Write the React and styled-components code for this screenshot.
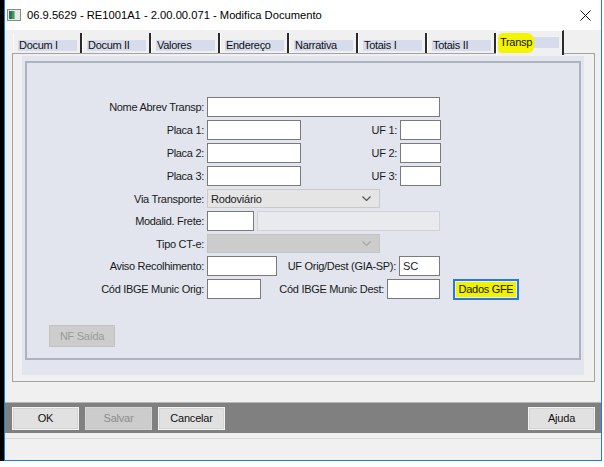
import styled, { createGlobalStyle } from "styled-components";

const GlobalStyle = createGlobalStyle`
  html, body { margin: 0; background: #fff; }
  body { font-family: "Liberation Sans", Arial, sans-serif; color: #1a1a1a; }
  * { box-sizing: border-box; }
`;

const Screen = styled.div`
  display: flex;
  width: 602px;
  height: 461px;
  border-left: 4px solid #000;
`;

const Window = styled.div`
  width: 598px;
  display: flex;
  flex-direction: column;
  border: 1px solid #1c7fd6;
  border-top: none;
`;

const TitleBar = styled.div`
  height: 30px;
  flex: none;
  background: #fff;
  display: flex;
  align-items: center;
  padding: 0 10px 0 2px;
  font-size: 11.2px;
  color: #000;
`;

const TitleText = styled.span`
  flex: 1;
  margin-left: 6px;
`;

const Body = styled.div`
  flex: 1;
  background: #f0f0f0;
  display: flex;
  flex-direction: column;
`;

const TabArea = styled.div`
  padding: 0 6px 0 7px;
`;

const TabStrip = styled.div`
  height: 23px;
  display: flex;
  align-items: flex-end;
  padding-left: 1px;
`;

const Tab = styled.div`
  width: ${({ $active }) => ($active ? 68 : 69)}px;
  height: ${({ $active }) => ($active ? 25 : 20)}px;
  margin-bottom: ${({ $active }) => ($active ? -2 : 0)}px;
  position: relative;
  z-index: ${({ $active }) => ($active ? 2 : 0)};
  background: #f0f0f0;
  border-left: 1px solid #fff;
  border-top: ${({ $active }) => ($active ? "1px solid #fff" : "none")};
  border-right: 2px solid #2a2a2a;
  padding: ${({ $active }) => ($active ? "6px 3px 0 1px" : "7px 3px 0 4px")};
`;

const TabLabel = styled.div`
  height: 11px;
  background: #d6dcec;
  font-size: 11px;
  line-height: 11px;
  letter-spacing: -0.3px;
  padding-left: 1px;
  white-space: nowrap;
  color: #111;
  display: flex;
  align-items: center;
`;

const Highlight = styled.span`
  background: #f4f400;
  border-radius: 5px 7px 6px 4px;
  padding: 4px 2px 5px 2px;
  margin-left: -1px;
`;

const TabPage = styled.div`
  height: 329px;
  border: 1px solid #a3a3a3;
  padding: 2px 10px 6px 9px;
  display: flex;
`;

const Lavender = styled.div`
  flex: 1;
  background: #e2e5ee;
  padding: 5px 3px 15px 3px;
  display: flex;
`;

const Panel = styled.div`
  flex: 1;
  border: 2px solid #acb3bf;
  background: #e2e5ee;
  padding-top: 34px;
  display: flex;
  flex-direction: column;
  gap: 3px;
`;

const Row = styled.div`
  height: ${({ $h }) => $h || 20}px;
  display: flex;
  align-items: center;
`;

const Label = styled.span`
  width: ${({ $w }) => $w || 177}px;
  margin-right: 3px;
  text-align: right;
  font-size: 11px;
  letter-spacing: -0.3px;
  white-space: nowrap;
  color: #1a1a1a;
`;

const Input = styled.div`
  width: ${({ $w }) => $w}px;
  height: 20px;
  margin-left: ${({ $ml }) => $ml || 0}px;
  background: ${({ $disabled }) => ($disabled ? "#e9eaee" : "#fff")};
  border: 1px solid ${({ $disabled }) => ($disabled ? "#d2d2d6" : "#7a7a7a")};
  font-size: 11px;
  padding: 0 3px;
  display: flex;
  align-items: center;
`;

const Select = styled.div`
  width: ${({ $w }) => $w}px;
  height: 19px;
  background: ${({ $disabled }) => ($disabled ? "#cccccc" : "#e5e5e5")};
  border: 1px solid ${({ $disabled }) => ($disabled ? "#c4c4c4" : "#cacaca")};
  font-size: 11px;
  letter-spacing: -0.2px;
  padding: 0 8px 0 3px;
  display: flex;
  align-items: center;
  justify-content: space-between;
`;

const GfeButton = styled.div`
  width: 66px;
  height: 21px;
  margin-left: 13px;
  border: 2px solid #2a79d4;
  background: #e5eef8;
  padding: 1px;
  display: flex;
`;

const GfeInner = styled.div`
  flex: 1;
  background: #f2f200;
  font-size: 11px;
  letter-spacing: -0.3px;
  display: flex;
  align-items: center;
  justify-content: center;
  color: #111;
`;

const NfButton = styled.div`
  width: 66px;
  height: 22px;
  margin: 23px 0 0 22px;
  background: #cdcdcd;
  border: 1px solid #c2c2c2;
  color: #9a9a9a;
  font-size: 11px;
  letter-spacing: -0.3px;
  display: flex;
  align-items: center;
  justify-content: center;
`;

const ButtonBar = styled.div`
  margin-top: 20px;
  height: 31px;
  background: #808080;
  border-top: 1px solid #b6b6b6;
  display: flex;
  align-items: center;
  gap: 6px;
  padding: 0 6px 0 7px;
`;

const Button = styled.div`
  width: 67px;
  height: 23px;
  margin-left: ${({ $push }) => ($push ? "auto" : "0")};
  background: ${({ $disabled }) => ($disabled ? "#cccccc" : "#e1e1e1")};
  border: 1px solid ${({ $disabled }) => ($disabled ? "#d6d6d6" : "#f3f3f3")};
  box-shadow: inset 0 0 0 1px ${({ $disabled }) => ($disabled ? "#c8c8c8" : "#d4d4d4")};
  color: ${({ $disabled }) => ($disabled ? "#8d8d8d" : "#111")};
  font-size: 11px;
  letter-spacing: -0.2px;
  display: flex;
  align-items: center;
  justify-content: center;
`;

const StatusLine = styled.div`
  margin-top: 5px;
  border-top: 1px solid #d9d9d9;
  flex: 1;
`;

const AppIcon = () => (
  <svg width="14" height="12" viewBox="0 0 14 12">
    <rect x="0.5" y="0.5" width="13" height="11" fill="#e8e8e8" stroke="#8a8a8a" />
    <rect x="2" y="2" width="3" height="8" fill="#2f6f5e" />
    <rect x="5" y="2" width="2" height="8" fill="#3f9f55" />
    <rect x="7" y="2" width="1" height="8" fill="#7fbf8f" />
  </svg>
);

const CloseIcon = () => (
  <svg width="11" height="11" viewBox="0 0 11 11">
    <path d="M0.5 0.5 L10.5 10.5 M10.5 0.5 L0.5 10.5" stroke="#111" strokeWidth="1" />
  </svg>
);

const Chevron = ({ color }) => (
  <svg width="9" height="5" viewBox="0 0 9 5">
    <path d="M0.5 0.5 L4.5 4.5 L8.5 0.5" fill="none" stroke={color} strokeWidth="1.2" />
  </svg>
);

const tabs = ["Docum I", "Docum II", "Valores", "Endereço", "Narrativa", "Totais I", "Totais II"];

export default function App() {
  return (
    <>
      <GlobalStyle />
      <Screen>
        <Window>
          <TitleBar>
            <AppIcon />
            <TitleText>06.9.5629 - RE1001A1 - 2.00.00.071 - Modifica Documento</TitleText>
            <CloseIcon />
          </TitleBar>
          <Body>
            <TabArea>
              <TabStrip>
                {tabs.map((t) => (
                  <Tab key={t}>
                    <TabLabel>{t}</TabLabel>
                  </Tab>
                ))}
                <Tab $active>
                  <TabLabel>
                    <Highlight>Transp</Highlight>
                  </TabLabel>
                </Tab>
              </TabStrip>
              <TabPage>
                <Lavender>
                  <Panel>
                    <Row>
                      <Label>Nome Abrev Transp:</Label>
                      <Input $w={233} />
                    </Row>
                    {[1, 2, 3].map((n) => (
                      <Row key={n}>
                        <Label>Placa {n}:</Label>
                        <Input $w={94} />
                        <Label $w={96}>UF {n}:</Label>
                        <Input $w={41} />
                      </Row>
                    ))}
                    <Row $h={19}>
                      <Label>Via Transporte:</Label>
                      <Select $w={173}>
                        Rodoviário
                        <Chevron color="#555" />
                      </Select>
                    </Row>
                    <Row>
                      <Label>Modalid. Frete:</Label>
                      <Input $w={47} />
                      <Input $w={183} $ml={3} $disabled />
                    </Row>
                    <Row $h={19}>
                      <Label>Tipo CT-e:</Label>
                      <Select $w={173} $disabled>
                        <span />
                        <Chevron color="#a8a8a8" />
                      </Select>
                    </Row>
                    <Row>
                      <Label>Aviso Recolhimento:</Label>
                      <Input $w={70} />
                      <Label $w={119}>UF Orig/Dest (GIA-SP):</Label>
                      <Input $w={41}>SC</Input>
                    </Row>
                    <Row>
                      <Label>Cód IBGE Munic Orig:</Label>
                      <Input $w={54} />
                      <Label $w={123}>Cód IBGE Munic Dest:</Label>
                      <Input $w={53} />
                      <GfeButton>
                        <GfeInner>Dados GFE</GfeInner>
                      </GfeButton>
                    </Row>
                    <NfButton>NF Saída</NfButton>
                  </Panel>
                </Lavender>
              </TabPage>
            </TabArea>
            <ButtonBar>
              <Button>OK</Button>
              <Button $disabled>Salvar</Button>
              <Button>Cancelar</Button>
              <Button $push>Ajuda</Button>
            </ButtonBar>
            <StatusLine />
          </Body>
        </Window>
      </Screen>
    </>
  );
}
